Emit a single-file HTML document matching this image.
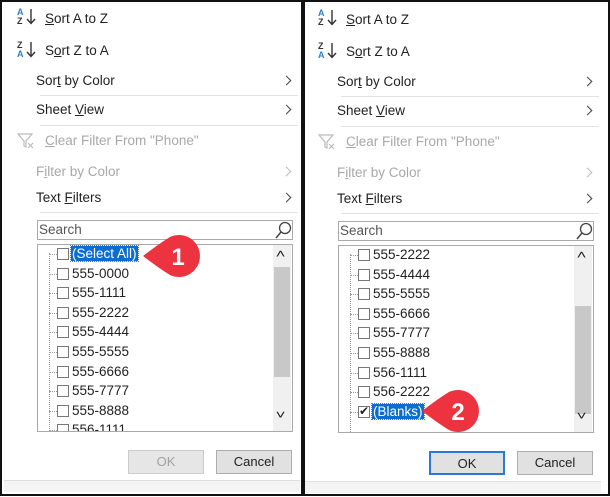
<!DOCTYPE html>
<html><head><style>
*{margin:0;padding:0;box-sizing:border-box}
body{width:610px;height:496px;background:#fff;position:relative;overflow:hidden;font-family:"Liberation Sans",sans-serif;font-size:13.5px;color:#222}
.p{position:absolute;top:0;height:496px;border:2px solid #111;background:#fff}
.a{position:absolute;white-space:nowrap}
.dis{color:#a8a8a8}
.sep{position:absolute;height:1px;background:#e2e2e2}
.chev{position:absolute;width:7px;height:7px;border-right:1.3px solid #444;border-top:1.3px solid #444;transform:rotate(45deg)}
.box{position:absolute;border:1px solid #a9a9a9;background:#fff}
.cb{position:absolute;width:12px;height:12px;border:1px solid #777;background:#fff}
.btn{position:absolute;height:24px;border:1px solid #adadad;background:#e1e1e1;text-align:center;line-height:22px;font-size:13px}
.u{text-decoration:underline}
.sort{position:absolute;font-size:9px;line-height:9px;font-weight:bold;color:#2a7fcf}
</style></head><body>

<div class="p" style="left:0;width:303px"></div>
<div id="L" style="position:absolute;left:0;top:0;width:303px;height:496px">
 <div class="sort" style="left:17px;top:8px">A<br><span style="color:#333">Z</span></div>
 <svg style="position:absolute;left:26px;top:8px" width="10" height="17"><path d="M5 1V15M1 11L5 15.5L9 11" fill="none" stroke="#333" stroke-width="1.4"/></svg>
 <div class="a" style="left:45px;top:11px"><span class="u">S</span>ort A to Z</div>
 <div class="sort" style="left:17px;top:41px"><span style="color:#333">Z</span><br>A</div>
 <svg style="position:absolute;left:26px;top:41px" width="10" height="17"><path d="M5 1V15M1 11L5 15.5L9 11" fill="none" stroke="#333" stroke-width="1.4"/></svg>
 <div class="a" style="left:45px;top:43px">S<span class="u">o</span>rt Z to A</div>
 <div class="a" style="left:36px;top:73px">Sor<span class="u">t</span> by Color</div>
 <div class="chev" style="left:283px;top:77px"></div>
 <div class="sep" style="left:40px;top:95px;width:258px"></div>
 <div class="a" style="left:36px;top:102px">Sheet <span class="u">V</span>iew</div>
 <div class="chev" style="left:283px;top:106px"></div>
 <div class="sep" style="left:40px;top:125px;width:258px"></div>
 <svg style="position:absolute;left:17px;top:133px" width="18" height="16"><path d="M1 1H15L9 8V14L7 13V8Z" fill="none" stroke="#bbb" stroke-width="1.2"/><path d="M11 10L16 15M16 10L11 15" stroke="#bbb" stroke-width="1.2"/></svg>
 <div class="a dis" style="left:45px;top:133px"><span class="u">C</span>lear Filter From "Phone"</div>
 <div class="a dis" style="left:36px;top:164px">F<span class="u">i</span>lter by Color</div>
 <div class="chev" style="left:283px;top:168px;border-color:#bbb"></div>
 <div class="a" style="left:36px;top:190px">Text <span class="u">F</span>ilters</div>
 <div class="chev" style="left:283px;top:194px"></div>
 <div class="sep" style="left:40px;top:212px;width:258px"></div>
 <div class="box" style="left:37px;top:220px;width:256px;height:20px"></div>
 <div class="a" style="left:39px;top:222px;color:#555">Search</div>
 <svg style="position:absolute;left:275px;top:221px" width="17" height="18"><circle cx="10" cy="7" r="5.5" fill="none" stroke="#444" stroke-width="1.3"/><path d="M6 11L1 17" stroke="#444" stroke-width="1.5"/></svg>
 <div class="box" style="left:37px;top:244px;width:256px;height:188px;overflow:hidden">
  <div style="position:absolute;left:11px;top:8px;width:0;height:190px;border-left:1px dotted #999"></div>
  <div style="position:absolute;left:235px;top:0;width:18px;height:186px;background:#f0f0f0"></div>
  <div style="position:absolute;left:236px;top:22px;width:16px;height:110px;background:#c8c8c8"></div>
  <div class="a" style="left:239px;top:2px;font-size:12px;transform:scaleX(1.4)">˄</div>
  <div class="a" style="left:239px;top:163px;font-size:12px;transform:scaleX(1.4)">˅</div>
 </div>
 <div class="btn" style="left:128px;top:450px;width:76px;color:#a0a0a0;border-color:#ccc;background:#e6e6e6">OK</div>
 <div class="btn" style="left:216px;top:450px;width:76px">Cancel</div>
 <div style="position:absolute;left:4px;top:480px;width:296px;height:12px;background:#f4f4f4;border-top:1px solid #e0e0e0"></div>
</div>

<div class="p" style="left:303px;width:307px"></div>
<div id="R" style="position:absolute;left:301px;top:1px;width:307px;height:496px"></div>

<div style="position:absolute;left:0;top:0;width:303px;height:496px;border:2px solid #111;pointer-events:none"></div>

<script>
var L=document.getElementById('L'),R=document.getElementById('R');
R.innerHTML=L.innerHTML;
function rows(el,items,top){
 var h='';
 items.forEach(function(t,i){
  var y=top+i*19.6;
  h+='<div style="position:absolute;left:49px;top:'+(y+6)+'px;width:8px;border-top:1px dotted #999"></div>';
  h+='<div class="cb" style="left:57px;top:'+y+'px">'+(t[1]?'<span style="position:absolute;left:0;top:-3px;font-size:12px">✔</span>':'')+'</div>';
  h+='<div class="a" style="left:72px;top:'+(y-2)+'px;font-size:13.5px;'+(t[2]?'background:#0a6ed1;color:#fff;outline:1px dotted #c60;padding:0 1px;left:71px':'')+'">'+t[0]+'</div>';
 });
 el.insertAdjacentHTML('beforeend',h);
}
rows(L,[['(Select All)',0,1],['555-0000'],['555-1111'],['555-2222'],['555-4444'],['555-5555'],['555-6666'],['555-7777'],['555-8888'],['556-1111']],248);
rows(R,[['555-2222'],['555-4444'],['555-5555'],['555-6666'],['555-7777'],['555-8888'],['556-1111'],['556-2222'],['(Blanks)',1,1]],248);
var okR=R.querySelectorAll('.btn')[0];okR.style.color='#222';okR.style.border='2px solid #2a7ad5';okR.style.background='#e1e1e1';
var sb=R.querySelectorAll('.box')[1].children[2];sb.style.top='60px';sb.style.height='108px';
</script>
<div style="position:absolute;left:38px;top:431px;width:240px;height:8px;background:#fff"></div>
<div style="position:absolute;left:38px;top:431px;width:254px;height:1px;background:#a9a9a9"></div>

<svg style="position:absolute;left:0;top:0" width="610" height="496">
 <path d="M143 256 Q160 243 170 237 A21 21 0 1 1 170 275 Q160 269 143 256Z" fill="#ee3340"/>
 <text x="178" y="265" font-family="Liberation Sans" font-weight="bold" font-size="24" fill="#fff" text-anchor="middle">1</text>
 <path d="M422 411 Q439 398 449 392 A21 21 0 1 1 449 430 Q439 424 422 411Z" fill="#ee3340"/>
 <text x="458" y="420" font-family="Liberation Sans" font-weight="bold" font-size="24" fill="#fff" text-anchor="middle">2</text>
</svg>
</body></html>
